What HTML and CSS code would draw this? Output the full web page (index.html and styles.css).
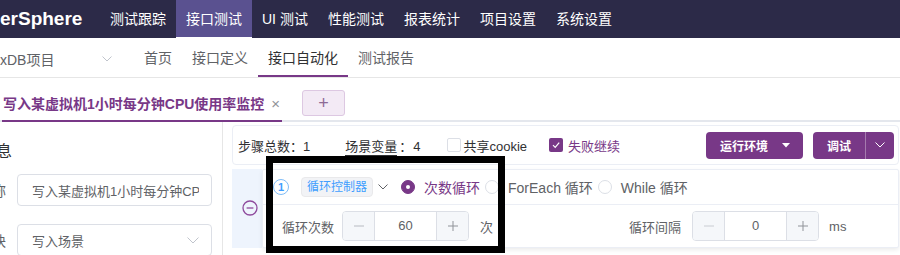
FILE: index.html
```html
<!DOCTYPE html>
<html lang="zh-CN">
<head>
<meta charset="utf-8">
<title>MeterSphere</title>
<link rel="stylesheet" href="styles.css">
</head>
<body>
<header class="topnav">
  <div class="logo">erSphere</div>
  <nav class="topmenu">
    <a class="tm-item">测试跟踪</a>
    <a class="tm-item active">接口测试</a>
    <a class="tm-item">UI 测试</a>
    <a class="tm-item">性能测试</a>
    <a class="tm-item">报表统计</a>
    <a class="tm-item">项目设置</a>
    <a class="tm-item">系统设置</a>
  </nav>
</header>

<div class="subnav">
  <div class="project">
    <span>xDB项目</span>
    <svg class="chev" viewBox="0 0 10 6" width="10" height="6"><polyline points="0.5,0.5 5,5 9.5,0.5" fill="none" stroke="#c0c4cc" stroke-width="1"/></svg>
  </div>
  <a class="sn-item">首页</a>
  <a class="sn-item">接口定义</a>
  <a class="sn-item active">接口自动化</a>
  <a class="sn-item">测试报告</a>
</div>

<div class="tabbar">
  <div class="tab">
    <span class="tab-title">写入某虚拟机1小时每分钟CPU使用率监控</span>
    <span class="tab-close">×</span>
  </div>
  <button class="tab-add">+</button>
</div>

<div class="main">
  <aside class="left">
    <div class="left-inner">
      <div class="left-title">基本信息</div>
      <div class="form-row">
        <label class="form-label">场景名称</label>
        <div class="input"><span class="input-text">写入某虚拟机1小时每分钟CPU使用率监控</span></div>
      </div>
      <div class="form-row second">
        <label class="form-label">所属模块</label>
        <div class="input select">
          <span class="input-text">写入场景</span>
          <svg class="sel-chev" viewBox="0 0 12 7" width="12" height="7"><polyline points="0.5,0.5 6,6 11.5,0.5" fill="none" stroke="#c0c4cc" stroke-width="1"/></svg>
        </div>
      </div>
    </div>
  </aside>

  <section class="right">
    <div class="summary">
      <span class="sum-item">步骤总数：1</span>
      <span class="sum-item vars"><span class="ul">场景变量</span><span class="colon">：</span><span class="num">4</span></span>
      <label class="check"><span class="box"></span><span class="check-label">共享cookie</span></label>
      <label class="check checked"><span class="box"><svg viewBox="0 0 14 14" width="14" height="14"><polyline points="4,7.2 6.2,9.4 10.2,4.6" fill="none" stroke="#fff" stroke-width="1.2"/></svg></span><span class="check-label">失败继续</span></label>
      <div class="actions">
        <button class="btn env">运行环境<svg class="caret" viewBox="0 0 8 5" width="8" height="5"><polygon points="0,0 8,0 4,4.5" fill="#fff"/></svg></button>
        <div class="btn-group">
          <button class="btn debug">调试</button>
          <button class="btn split"><svg viewBox="0 0 10 6" width="10" height="6"><polyline points="0.5,0.5 5,5 9.5,0.5" fill="none" stroke="#fff" stroke-width="1"/></svg></button>
        </div>
      </div>
    </div>

    <div class="steps">
      <div class="gutter">
        <svg class="minus" viewBox="0 0 16 16" width="16" height="16"><circle cx="8" cy="8" r="7" fill="none" stroke="#8e4a9d" stroke-width="1.3"/><line x1="4.6" y1="8" x2="11.4" y2="8" stroke="#8e4a9d" stroke-width="1.3"/></svg>
      </div>
      <div class="step-card">
        <div class="step-head">
          <span class="idx">1</span>
          <span class="tag">循环控制器</span>
          <svg class="head-chev" viewBox="0 0 10 6" width="10" height="6"><polyline points="0.5,0.5 5,5 9.5,0.5" fill="none" stroke="#606266" stroke-width="1"/></svg>
          <label class="radio checked"><span class="dot"></span><span class="radio-label">次数循环</span></label>
          <label class="radio"><span class="dot"></span><span class="radio-label">ForEach 循环</span></label>
          <label class="radio"><span class="dot"></span><span class="radio-label">While 循环</span></label>
        </div>
        <div class="step-body">
          <span class="field-label">循环次数</span>
          <div class="num-input">
            <span class="ni-btn"><svg viewBox="0 0 12 12" width="12" height="12"><line x1="1" y1="6" x2="11" y2="6" stroke="#b7bac1" stroke-width="1"/></svg></span>
            <span class="ni-val">60</span>
            <span class="ni-btn"><svg viewBox="0 0 12 12" width="12" height="12"><line x1="1" y1="6" x2="11" y2="6" stroke="#909399" stroke-width="1"/><line x1="6" y1="1" x2="6" y2="11" stroke="#909399" stroke-width="1"/></svg></span>
          </div>
          <span class="unit">次</span>
          <span class="field-label interval">循环间隔</span>
          <div class="num-input">
            <span class="ni-btn"><svg viewBox="0 0 12 12" width="12" height="12"><line x1="1" y1="6" x2="11" y2="6" stroke="#c9ccd2" stroke-width="1"/></svg></span>
            <span class="ni-val">0</span>
            <span class="ni-btn"><svg viewBox="0 0 12 12" width="12" height="12"><line x1="1" y1="6" x2="11" y2="6" stroke="#909399" stroke-width="1"/><line x1="6" y1="1" x2="6" y2="11" stroke="#909399" stroke-width="1"/></svg></span>
          </div>
          <span class="unit ms">ms</span>
        </div>
      </div>
    </div>
  </section>
</div>

<div class="highlight"></div>
</body>
</html>
```

FILE: styles.css
```css
* { box-sizing: border-box; }

html, body {
  margin: 0;
  padding: 0;
}

body {
  width: 900px;
  height: 255px;
  overflow: hidden;
  position: relative;
  background: #fff;
  font-family: "Liberation Sans", "Noto Sans CJK SC", sans-serif;
  color: #606266;
}

a { text-decoration: none; }

/* top navigation */
.topnav {
  display: flex;
  height: 38px;
  background: #2c2a48;
}

.logo {
  width: 100px;
  line-height: 38px;
  font-size: 19px;
  font-weight: bold;
  color: #fff;
}

.topmenu {
  display: flex;
}

.tm-item {
  padding: 0 10px;
  line-height: 38px;
  font-size: 14px;
  color: #fff;
}

.tm-item.active {
  background: #5a5190;
  box-shadow: inset 0 -1px 0 #fff;
}

/* second navigation */
.subnav {
  display: flex;
  height: 40px;
  border-bottom: 1px solid #e6e6e6;
}

.project {
  width: 112px;
  margin-right: 22px;
  display: flex;
  align-items: center;
  justify-content: space-between;
  padding-top: 3px;
  font-size: 14px;
  color: #606266;
}

.sn-item {
  padding: 4px 10px 0;
  line-height: 33px;
  height: 39px;
  font-size: 14px;
  color: #606266;
  border-bottom: 2px solid transparent;
}

.sn-item.active {
  color: #303133;
  border-bottom-color: #783887;
}

/* tabs */
.tabbar {
  display: flex;
  align-items: flex-start;
  height: 44px;
  border-bottom: 2px solid #e4e7ed;
}

.tab {
  height: 44px;
  margin-left: 2px;
  padding: 8px 2px 0 1px;
  display: flex;
  align-items: center;
  border-bottom: 2px solid #783887;
}

.tab-title {
  font-size: 14px;
  font-weight: bold;
  color: #783887;
}

.tab-close {
  margin-left: 7px;
  font-size: 15px;
  color: #909399;
}

.tab-add {
  width: 43px;
  height: 26px;
  margin: 12px 0 0 20px;
  padding: 0;
  background: #f3eaf5;
  border: 1px solid #ddc8e2;
  border-radius: 3px;
  font-family: "Liberation Sans", sans-serif;
  font-size: 18px;
  line-height: 22px;
  color: #8d6b95;
}

/* main */
.main {
  display: flex;
  height: 133px;
}

.left {
  width: 223px;
  border-right: 1px solid #e6e6e6;
  flex-shrink: 0;
}

.left-inner {
  width: 302px;
  margin-left: -80px;
}

.left-title {
  margin-top: 19px;
  padding-left: 28px;
  line-height: 22px;
  font-size: 16px;
  color: #303133;
}

.form-row {
  display: grid;
  grid-template-columns: 86px 195px;
  column-gap: 11px;
  align-items: center;
  margin-top: 11px;
}

.form-row.second {
  margin-top: 18px;
}

.form-label {
  text-align: right;
  font-size: 14px;
  color: #606266;
}

.input {
  height: 32px;
  border: 1px solid #dcdfe6;
  border-radius: 4px;
  padding: 0 12px 0 14px;
  display: flex;
  align-items: center;
  font-size: 13px;
  color: #606266;
}

.input-text {
  flex: 1;
  white-space: nowrap;
  overflow: hidden;
}

/* right */
.right {
  flex: 1;
  padding: 3px 1px 0 9px;
  min-width: 0;
}

.summary {
  height: 40px;
  border: 1px solid #ebeef5;
  border-radius: 4px;
  display: flex;
  align-items: center;
  padding: 0 4px 0 5px;
  font-size: 13px;
  color: #303133;
}

.sum-item { white-space: nowrap; }

.vars { margin-left: 35px; }

.ul {
  border-bottom: 1px solid #303133;
  padding-bottom: 1px;
}

.colon { margin-left: 2px; }
.num { margin-left: 1px; }

.check {
  display: flex;
  align-items: center;
  margin-left: 26px;
}

.check.checked { margin-left: 22px; }

.box {
  width: 14px;
  height: 14px;
  border: 1px solid #dcdfe6;
  border-radius: 2px;
  background: #fff;
  display: flex;
}

.check.checked .box {
  border: none;
  background: #783887;
}

.check-label { margin-left: 3px; color: #303133; }

.check.checked .check-label { margin-left: 5px; color: #783887; }

.actions {
  margin-left: auto;
  display: flex;
  gap: 10px;
}

.btn {
  height: 27px;
  border: none;
  background: #783887;
  color: #fff;
  font-family: "Liberation Sans", "Noto Sans CJK SC", sans-serif;
  font-size: 12px;
  font-weight: bold;
  padding: 0;
  display: flex;
  align-items: center;
}

.env {
  width: 97px;
  border-radius: 4px;
  padding-left: 14px;
}

.caret { margin-left: 14px; }

.btn-group { display: flex; }

.debug {
  width: 53px;
  justify-content: center;
  border-radius: 4px 0 0 4px;
  border-right: 1px solid #a57aae;
}

.split {
  width: 28px;
  justify-content: center;
  border-radius: 0 4px 4px 0;
}

/* steps */
.steps {
  display: flex;
  margin-top: 4px;
  height: 79px;
}

.gutter {
  width: 30px;
  background: #eef4fd;
  padding: 31px 0 0 10px;
  flex-shrink: 0;
}

.minus { display: block; }

.step-card {
  flex: 1;
  border: 1px solid #ebeef5;
  border-radius: 2px;
  background: #fff;
  box-shadow: 0 2px 4px rgba(0, 0, 0, 0.08);
}

.step-head {
  height: 35px;
  border-bottom: 1px solid #ebeef5;
  display: flex;
  align-items: center;
  padding-left: 10px;
}

.idx {
  width: 16px;
  height: 16px;
  border: 1px solid #7fbcf7;
  border-radius: 50%;
  display: flex;
  align-items: center;
  justify-content: center;
  font-size: 11px;
  font-weight: bold;
  color: #409eff;
}

.tag {
  margin-left: 12px;
  height: 20px;
  padding: 0 5px;
  border: 1px solid #e9e9eb;
  border-radius: 4px;
  background: #f2f3f6;
  font-size: 12px;
  line-height: 18px;
  color: #409eff;
}

.head-chev { margin-left: 5px; }

.radio {
  display: flex;
  align-items: center;
  margin-left: 5px;
  font-size: 14px;
  color: #606266;
}

.radio.checked { margin-left: 13px; }

.dot {
  width: 14px;
  height: 14px;
  border-radius: 50%;
  border: 1px solid #dcdfe6;
  background: #fff;
  display: flex;
  align-items: center;
  justify-content: center;
}

.radio.checked .dot {
  border-color: #783887;
  background: #783887;
}

.radio.checked .dot::after {
  content: "";
  width: 4px;
  height: 4px;
  border-radius: 50%;
  background: #fff;
}

.radio-label { margin-left: 9px; }

.radio.checked .radio-label { color: #783887; }

.step-body {
  height: 42px;
  display: flex;
  align-items: center;
  padding-left: 19px;
  font-size: 13px;
  color: #606266;
}

.field-label { white-space: nowrap; }

.num-input {
  margin-left: 8px;
  width: 127px;
  height: 30px;
  border: 1px solid #dcdfe6;
  border-radius: 4px;
  display: flex;
  overflow: hidden;
}

.interval + .num-input { margin-left: 11px; }

.ni-btn {
  width: 32px;
  background: #f5f7fa;
  display: flex;
  align-items: center;
  justify-content: center;
}

.ni-btn:first-child { border-right: 1px solid #dcdfe6; }
.ni-btn:last-child { border-left: 1px solid #dcdfe6; }

.ni-val {
  flex: 1;
  text-align: center;
  line-height: 28px;
  font-size: 13px;
  color: #606266;
}

.unit { margin-left: 11px; }

.interval { margin-left: 136px; }

.unit.ms { margin-left: 10px; }

/* annotation overlay */
.highlight {
  position: absolute;
  left: 266px;
  top: 156px;
  width: 239px;
  height: 97px;
  border: 7px solid #000;
  pointer-events: none;
}
```
